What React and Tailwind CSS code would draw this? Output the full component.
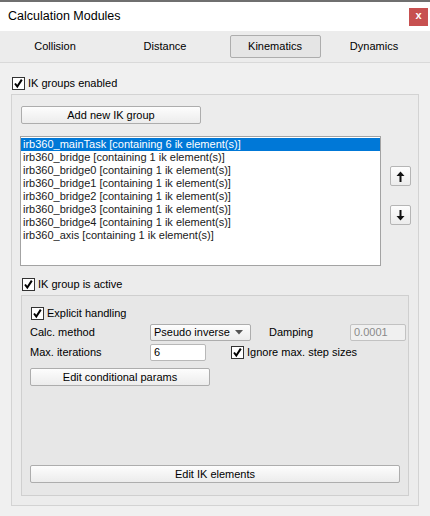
import React from "react";

const font = { fontFamily: '"Liberation Sans", Arial, sans-serif' };

const groups = [
  ["irb360_mainTask", 6],
  ["irb360_bridge", 1],
  ["irb360_bridge0", 1],
  ["irb360_bridge1", 1],
  ["irb360_bridge2", 1],
  ["irb360_bridge3", 1],
  ["irb360_bridge4", 1],
  ["irb360_axis", 1],
];

const CheckBox = ({ label, className = "" }) => (
  <label className={"flex items-center h-[13px] " + className}>
    <span className="w-[13px] h-[13px] bg-white border border-[#333] flex items-center justify-center shrink-0">
      <svg width="11" height="11" viewBox="0 0 11 11">
        <path d="M2 5.5 L4.3 8.6 L8.8 1.6" fill="none" stroke="#000" strokeWidth="2" />
      </svg>
    </span>
    <span className="ml-[3px] text-[11px] text-black whitespace-nowrap">{label}</span>
  </label>
);

const Button = ({ children, className = "" }) => (
  <button
    className={
      "h-[18px] rounded-[2px] border border-[#adadad] bg-gradient-to-b from-[#fdfdfd] to-[#ececec] text-[11px] text-black leading-none " +
      className
    }
  >
    {children}
  </button>
);

const Arrow = ({ down }) => (
  <svg width="9" height="11" viewBox="0 0 9 11">
    {down ? (
      <path d="M3.5 0 H5.5 V6 H8.5 L4.5 10.5 L0.5 6 H3.5 Z" fill="#111" />
    ) : (
      <path d="M3.5 11 H5.5 V5 H8.5 L4.5 0.5 L0.5 5 H3.5 Z" fill="#111" />
    )}
  </svg>
);

export default function App() {
  return (
    <div className="w-[430px] h-[516px] bg-[#f0f0f0] flex flex-col overflow-hidden" style={font}>
      <div className="h-[2px] bg-[#6f6f6f]" />
      <div className="h-[29px] bg-white flex items-center justify-between pl-[8px] pr-[2px]">
        <span className="text-[12.5px] text-black">Calculation Modules</span>
        <span className="w-[19px] h-[18px] bg-[#c75050] text-white text-[11px] font-bold flex items-center justify-center leading-none pb-[2px]">
          x
        </span>
      </div>
      <div className="h-[32px] bg-[#ececec] border-b border-[#d9d9d9] flex items-center text-[11px] text-black">
        <div className="w-[110px] text-center">Collision</div>
        <div className="w-[110px] text-center">Distance</div>
        <div className="w-[110px] flex justify-center">
          <div className="w-[91px] h-[23px] border border-[#adadad] rounded-[2px] bg-[#e5e5e5] flex items-center justify-center">
            Kinematics
          </div>
        </div>
        <div className="flex-1 text-center pr-[12px]">Dynamics</div>
      </div>

      <div className="flex-1 flex flex-col px-[11px] pt-[14px]">
        <CheckBox label="IK groups enabled" className="ml-[1px]" />
        <div className="mt-[4px] h-[412px] border border-[#d3d3d3] bg-[#ececec] flex flex-col pl-[9px] pr-[9px] pt-[11px] pb-[9px]">
          <Button className="w-[180px]">Add new IK group</Button>
          <div className="mt-[12px] flex">
            <div className="w-[361px] h-[130px] shrink-0 bg-white border border-[#a3a3a3] -ml-[1px] py-[1px] text-[11px] leading-[13px]">
              {groups.map(([name, n], i) => (
                <div
                  key={name}
                  className={
                    "px-[2px] h-[13px] whitespace-nowrap " +
                    (i === 0 ? "bg-[#0078d7] text-white" : "text-[#1a1a1a]")
                  }
                >
                  {name} [containing {n} ik element(s)]
                </div>
              ))}
            </div>
            <div className="ml-[9px] flex flex-col pt-[30px] gap-[19px]">
              <button className="w-[21px] h-[20px] border border-[#b5b5b5] rounded-[2px] bg-gradient-to-b from-[#fdfdfd] to-[#ececec] flex items-center justify-center">
                <Arrow />
              </button>
              <button className="w-[21px] h-[20px] border border-[#b5b5b5] rounded-[2px] bg-gradient-to-b from-[#fdfdfd] to-[#ececec] flex items-center justify-center">
                <Arrow down />
              </button>
            </div>
          </div>
          <CheckBox label="IK group is active" className="mt-[12px] ml-[1px]" />
          <div className="mt-[4px] flex-1 border border-[#cfcfcf] bg-[#e7e7e7] flex flex-col pl-[8px] pr-[4px] pt-[11px] pb-[12px]">
            <CheckBox label="Explicit handling" className="ml-[1px]" />
            <div className="mt-[4px] flex items-center h-[17px]">
              <span className="w-[120px] shrink-0 text-[11px]">Calc. method</span>
              <div className="w-[101px] h-[17px] shrink-0 border border-[#adadad] rounded-[2px] bg-gradient-to-b from-[#fdfdfd] to-[#ececec] flex items-center justify-between pl-[3px] pr-[7px] text-[11px]">
                <span>Pseudo inverse</span>
                <svg width="8" height="5" viewBox="0 0 8 5">
                  <path d="M0 0 H8 L4 4.5 Z" fill="#555" />
                </svg>
              </div>
              <span className="ml-[18px] w-[81px] shrink-0 text-[11px]">Damping</span>
              <div className="w-[56px] h-[17px] shrink-0 border border-[#c2c2c2] rounded-[2px] bg-[#f0f0f0] text-[11px] text-[#8a8a8a] flex items-center pl-[3px]">
                0.0001
              </div>
            </div>
            <div className="mt-[3px] flex items-center h-[17px]">
              <span className="w-[120px] shrink-0 text-[11px]">Max. iterations</span>
              <div className="w-[56px] h-[17px] shrink-0 border border-[#b8b8b8] rounded-[2px] bg-white text-[11px] flex items-center pl-[3px]">
                6
              </div>
              <CheckBox label="Ignore max. step sizes" className="ml-[25px]" />
            </div>
            <Button className="mt-[7px] w-[180px]">Edit conditional params</Button>
            <div className="flex-1" />
            <Button className="w-[370px] h-[17px]">Edit IK elements</Button>
          </div>
        </div>
      </div>
    </div>
  );
}
